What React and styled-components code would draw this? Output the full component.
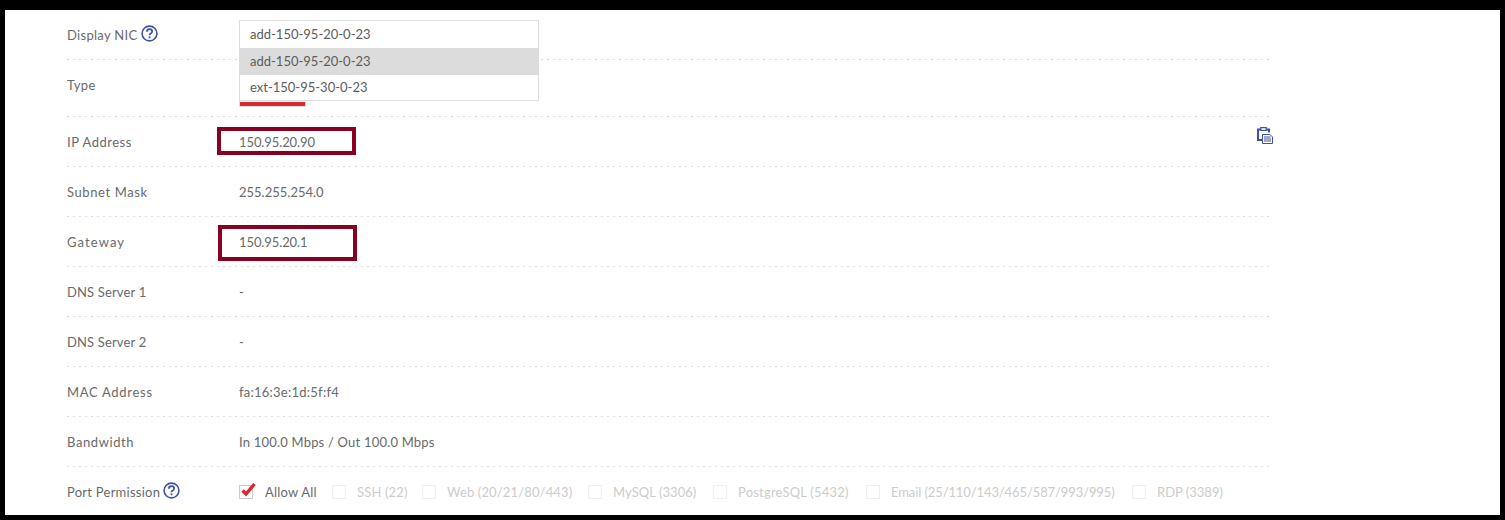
import React from 'react';
import styled, { createGlobalStyle } from 'styled-components';

const rows = [
  { label: 'IP Address', value: '150.95.20.90', marked: 'first', copy: true, labelTrack: 0.5, track: -0.1 },
  { label: 'Subnet Mask', value: '255.255.254.0', labelTrack: 0.6, track: 0 },
  { label: 'Gateway', value: '150.95.20.1', marked: 'second', labelTrack: 1.1, track: -0.1 },
  { label: 'DNS Server 1', value: '-', labelTrack: 0.15, track: 0 },
  { label: 'DNS Server 2', value: '-', labelTrack: 0.15, track: 0 },
  { label: 'MAC Address', value: 'fa:16:3e:1d:5f:f4', labelTrack: 0.7, track: 0.25 },
  { label: 'Bandwidth', value: 'In 100.0 Mbps / Out 100.0 Mbps', labelTrack: 0.6, track: 0.2 },
];

const ports = [
  { name: 'SSH (22)', width: 90, track: 0.15 },
  { name: 'Web (20/21/80/443)', width: 166, track: 0.15 },
  { name: 'MySQL (3306)', width: 125, track: 0.05 },
  { name: 'PostgreSQL (5432)', width: 153, track: 0.2 },
  { name: 'Email (25/110/143/465/587/993/995)', width: 266, track: -0.1 },
  { name: 'RDP (3389)', width: 100, track: 0 },
];

function HelpIcon() {
  return (
    <svg width="17" height="17" viewBox="0 0 17 17" fill="none">
      <circle cx="8.5" cy="8.5" r="7.4" stroke="#3f51a3" strokeWidth="1.6" />
      <path
        d="M5.9 6.7c0-1.6 1.1-2.5 2.6-2.5s2.6.9 2.6 2.2c0 1.1-.7 1.6-1.4 2.1-.7.4-1.2.8-1.2 1.8"
        stroke="#3f51a3"
        strokeWidth="1.8"
      />
      <rect x="7.6" y="11.4" width="1.8" height="1.9" fill="#3f51a3" />
    </svg>
  );
}

function CopyIcon() {
  return (
    <svg width="16" height="17" viewBox="0 0 16 17" fill="none">
      <path d="M1 3h3V1h5v2h3v10H1z" fill="#fff" />
      <path d="M4 2.5H1v10.5h5M9 2.5h3v3" stroke="#3f51a3" strokeWidth="2" />
      <rect x="3.8" y="0.6" width="5.4" height="2.8" fill="#fff" stroke="#3f51a3" strokeWidth="1.2" />
      <path d="M5.5 7.5h7.5l2.5 2.5v6.5h-10z" fill="#fff" stroke="#3f51a3" strokeWidth="1" />
      <path d="M7 10h6.5M7 12h7M7 14h7" stroke="#3f51a3" strokeWidth="1" />
    </svg>
  );
}

function App() {
  return (
    <>
      <GlobalStyle />
      <Frame>
        <NicRow>
          <Label>
            Display NIC
            <HelpMark $gap={4}>
              <HelpIcon />
            </HelpMark>
          </Label>
          <Dropdown>
            <Option>add-150-95-20-0-23</Option>
            <Option $active>add-150-95-20-0-23</Option>
            <Option $last>ext-150-95-30-0-23</Option>
          </Dropdown>
        </NicRow>
        <TypeRow>
          <Label>Type</Label>
          <TypeBar />
        </TypeRow>
        {rows.map(row => (
          <Row key={row.label}>
            <Label $track={row.labelTrack}>{row.label}</Label>
            <Value $track={row.track}>{row.value}</Value>
            {row.marked && <Marker $kind={row.marked} />}
            {row.copy && (
              <CopyButton>
                <CopyIcon />
              </CopyButton>
            )}
          </Row>
        ))}
        <PortRow>
          <Label $track={0.25}>
            Port Permission
            <HelpMark $gap={3}>
              <HelpIcon />
            </HelpMark>
          </Label>
          <PortList>
            <Check $width={93}>
              <Box>
                <svg width="20" height="18" viewBox="0 0 20 18">
                  <path d="M3.5 9.5l3.5 3.5L15.5 3" fill="none" stroke="#d9262c" strokeWidth="3.4" />
                </svg>
              </Box>
              <CheckText $track={0.2}>Allow All</CheckText>
            </Check>
            {ports.map(port => (
              <Check key={port.name} $width={port.width}>
                <Box $off />
                <CheckText $off $track={port.track}>
                  {port.name}
                </CheckText>
              </Check>
            ))}
          </PortList>
        </PortRow>
      </Frame>
    </>
  );
}

const GlobalStyle = createGlobalStyle`
  html, body {
    margin: 0;
    height: 520px;
    overflow: hidden;
    background: #000;
  }
`;

const Frame = styled.div`
  box-sizing: border-box;
  width: 1495px;
  height: 505px;
  margin: 10px 5px 5px;
  padding-left: 62px;
  background: #fff;
  color: #6a6a6a;
  font-family: 'Lato', sans-serif;
  font-size: 13px;
  overflow: hidden;
`;

const Row = styled.div`
  position: relative;
  box-sizing: border-box;
  display: flex;
  align-items: center;
  width: 1202px;
  height: 50px;
  background-image: linear-gradient(to right, #ddd 2px, transparent 2px);
  background-size: 6px 1px;
  background-repeat: repeat-x;
  background-position: left bottom;
`;

const NicRow = styled(Row)`
  height: 50px;
`;

const TypeRow = styled(Row)`
  height: 57px;
  padding-bottom: 7px;
`;

const PortRow = styled(Row)`
  background-image: none;
`;

const Label = styled.div`
  display: flex;
  align-items: center;
  width: 172px;
  flex-shrink: 0;
  letter-spacing: ${props => props.$track ?? 0.3}px;
`;

const HelpMark = styled.span`
  display: inline-flex;
  margin-left: ${props => props.$gap}px;
  margin-top: -3px;
`;

const Value = styled.div`
  letter-spacing: ${props => props.$track}px;
`;

const Dropdown = styled.div`
  position: absolute;
  z-index: 2;
  left: 172px;
  top: 10px;
  box-sizing: border-box;
  width: 300px;
  height: 81px;
  border: 1px solid #ddd;
  background: #fff;
`;

const Option = styled.div`
  height: ${props => (props.$last ? '25px' : '27px')};
  line-height: ${props => (props.$last ? '25px' : '27px')};
  padding-left: 10px;
  color: #5c5c5c;
  background: ${props => (props.$active ? '#dcdcdc' : 'transparent')};
`;

const TypeBar = styled.div`
  position: absolute;
  left: 172px;
  top: 30px;
  box-sizing: border-box;
  width: 67px;
  height: 17px;
  border: 1px solid #ddd;
  border-top: 0;
  &::after {
    content: '';
    position: absolute;
    left: 0;
    bottom: 0;
    width: 65px;
    height: 4px;
    background: #d92b2b;
  }
`;

const Marker = styled.div`
  position: absolute;
  box-sizing: border-box;
  border: 4px solid #870022;
  width: 139px;
  left: ${props => (props.$kind === 'first' ? '150px' : '151px')};
  top: ${props => (props.$kind === 'first' ? '10px' : '8px')};
  height: ${props => (props.$kind === 'first' ? '28px' : '36px')};
`;

const CopyButton = styled.div`
  position: absolute;
  left: 1190px;
  top: 10px;
  line-height: 0;
`;

const PortList = styled.div`
  display: flex;
  align-items: center;
`;

const Check = styled.label`
  display: flex;
  align-items: center;
  width: ${props => props.$width}px;
  flex-shrink: 0;
`;

const Box = styled.span`
  position: relative;
  box-sizing: border-box;
  width: 14px;
  height: 14px;
  flex-shrink: 0;
  border: 1px solid ${props => (props.$off ? '#eee' : '#ccc')};
  svg {
    position: absolute;
    left: -1px;
    top: -5px;
  }
`;

const CheckText = styled.span`
  margin-left: ${props => (props.$off ? '11px' : '12px')};
  white-space: nowrap;
  letter-spacing: ${props => props.$track || 0}px;
  color: ${props => (props.$off ? '#ccc' : '#6a6a6a')};
`;

export default App;
